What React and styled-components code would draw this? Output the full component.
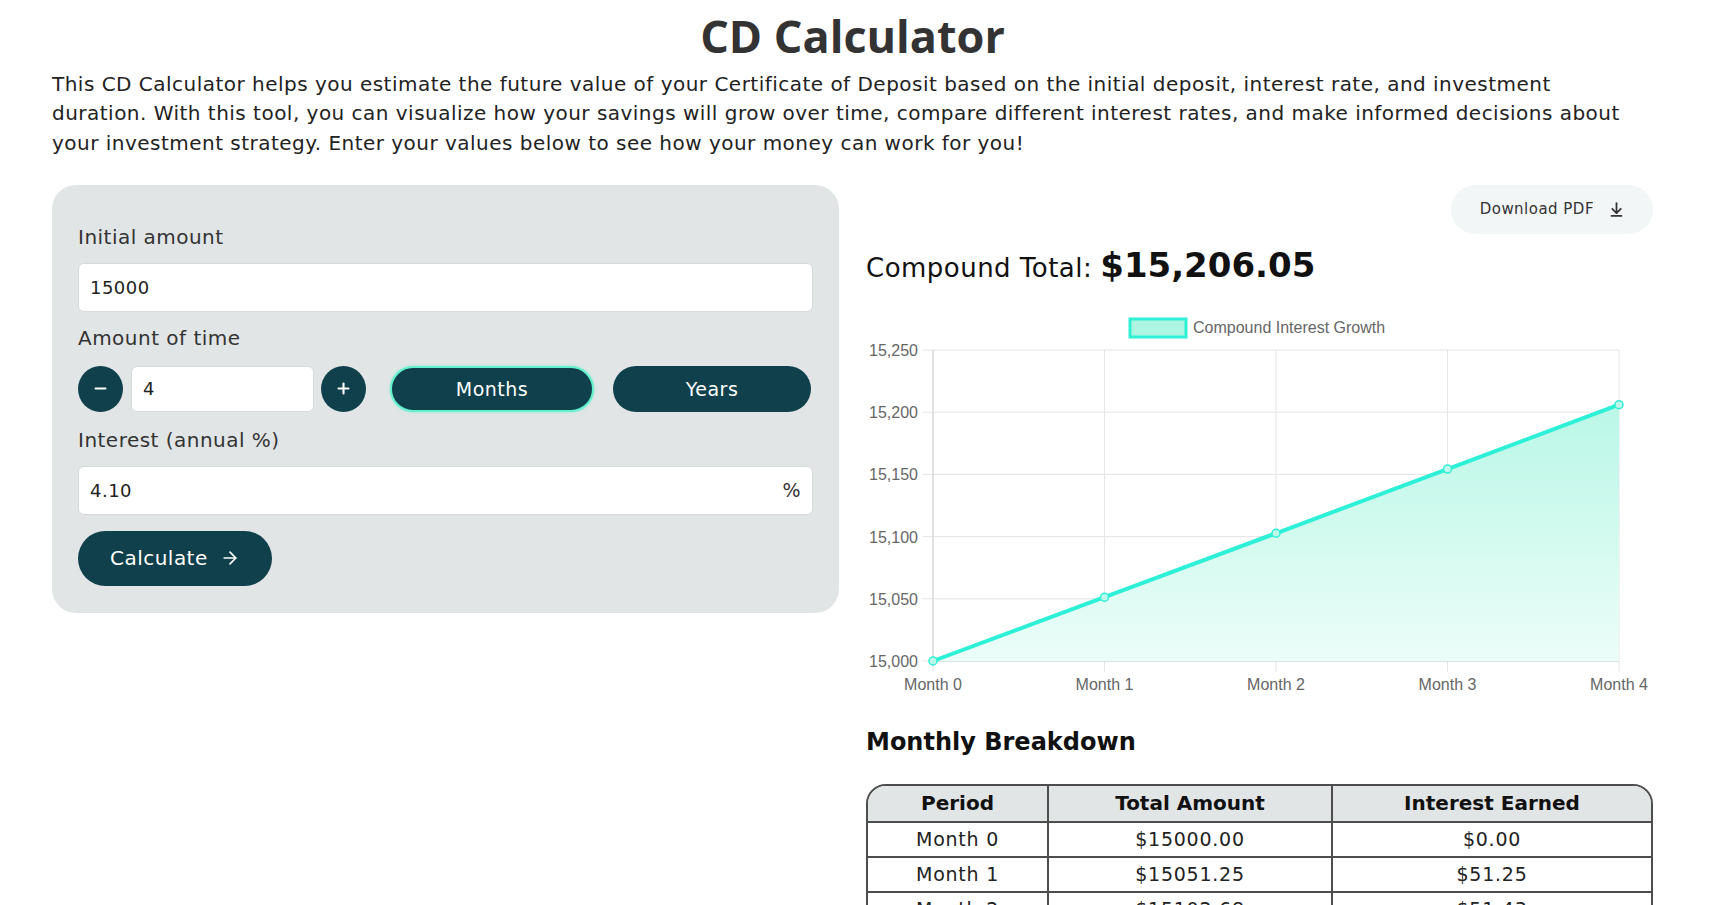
import React from "react";
import styled, { createGlobalStyle } from "styled-components";
import { Minus, Plus, ArrowRight, ArrowDownToLine } from "lucide-react";

const GlobalStyle = createGlobalStyle`
  * { box-sizing: border-box; }
  body {
    margin: 0;
    background: #ffffff;
    font-family: "DejaVu Sans", "Open Sans", sans-serif;
    letter-spacing: 0.03em;
    color: #222;
  }
`;

const Page = styled.div`
  width: 1653px;
  padding: 8px 0 40px 52px;
`;

const Title = styled.h1`
  margin: 0;
  text-align: center;
  font-family: "Open Sans", sans-serif;
  font-size: 45px;
  font-weight: 700;
  letter-spacing: 0;
  line-height: 56px;
  color: #333;
`;

const Intro = styled.p`
  margin: 6px 0 0;
  font-size: 20px;
  line-height: 29.3px;
  color: #222;
  white-space: nowrap;
`;

const Columns = styled.div`
  display: grid;
  grid-template-columns: 787px 787px;
  gap: 27px;
  margin-top: 27px;
  align-items: start;
`;

const Panel = styled.div`
  background: #e1e5e6;
  border-radius: 24px;
  padding: 38px 26px 27px;
  display: flex;
  flex-direction: column;
  align-items: stretch;
`;

const Label = styled.div`
  font-size: 20px;
  line-height: 28px;
  color: #333;
  margin-bottom: 12px;
`;

const Field = styled.div`
  display: flex;
  align-items: center;
  height: 49px;
  background: #fff;
  border: 1px solid #d6dadb;
  border-radius: 6px;
  padding: 0 11px;
  font-size: 18px;
  color: #222;
  margin-bottom: ${(p) => p.$mb ?? 12}px;
  width: ${(p) => (p.$w ? `${p.$w}px` : "auto")};
`;

const FieldValue = styled.span`
  flex: 1;
`;

const Suffix = styled.span`
  color: #333;
  font-size: 19px;
`;

const TimeRow = styled.div`
  display: flex;
  align-items: center;
  height: 46px;
  margin: 2px 0 14px;
`;

const RoundButton = styled.div`
  width: 45px;
  height: 46px;
  border-radius: 50%;
  background: #0f404b;
  color: #fff;
  display: flex;
  align-items: center;
  justify-content: center;
  flex-shrink: 0;
`;

const TimeInput = styled(Field)`
  height: 46px;
  margin: 0 7px 0 8px;
`;

const UnitButton = styled.div`
  width: ${(p) => p.$w}px;
  height: 46px;
  margin-left: ${(p) => p.$ml}px;
  border-radius: 23px;
  background: #0f404b;
  color: #fff;
  font-size: 19px;
  display: flex;
  align-items: center;
  justify-content: center;
  border: ${(p) => (p.$active ? "2.5px solid #63f0cc" : "none")};
  box-shadow: ${(p) => (p.$active ? "0 0 3px rgba(99,240,204,0.7)" : "none")};
`;

const CalcButton = styled.div`
  align-self: flex-start;
  display: flex;
  align-items: center;
  gap: 12px;
  height: 55px;
  padding: 0 32px 0 32px;
  margin-top: 2px;
  border-radius: 28px;
  background: #0f404b;
  color: #fff;
  font-size: 20px;
`;

const Results = styled.div`
  display: flex;
  flex-direction: column;
`;

const TopBar = styled.div`
  display: flex;
  justify-content: flex-end;
`;

const DownloadButton = styled.div`
  display: flex;
  align-items: center;
  gap: 14px;
  height: 49px;
  padding: 0 28px 0 29px;
  border-radius: 25px;
  background: #f3f6f7;
  color: #333;
  font-size: 15px;
`;

const Total = styled.div`
  display: flex;
  align-items: baseline;
  gap: 8px;
  margin-top: 11px;
  height: 52px;
  color: #111;
`;

const TotalLabel = styled.span`
  font-size: 26px;
`;

const TotalValue = styled.span`
  font-size: 34px;
  font-weight: 700;
  letter-spacing: 0;
`;

const ChartBox = styled.div`
  width: 787px;
  height: 400px;
  margin-top: 3px;
  svg {
    display: block;
    font-family: "Liberation Sans", Arial, sans-serif;
    letter-spacing: 0;
  }
`;

const SectionTitle = styled.h2`
  margin: 26px 0 0;
  font-size: 24px;
  line-height: 32px;
  font-weight: 700;
  letter-spacing: 0;
  color: #111;
`;

const Table = styled.table`
  margin-top: 26px;
  width: 787px;
  border-collapse: separate;
  border-spacing: 0;
  border: 2px solid #4d4d4d;
  border-radius: 20px 20px 0 0;
  overflow: hidden;
  font-size: 19px;
  letter-spacing: 0.04em;
  color: #222;
  th,
  td {
    text-align: center;
    border-left: 2px solid #4d4d4d;
    border-top: 2px solid #4d4d4d;
    padding: 0;
  }
  th:first-child,
  td:first-child {
    border-left: none;
  }
  thead th {
    border-top: none;
    background: #e1e5e6;
    font-size: 20px;
    font-weight: 700;
    letter-spacing: 0;
    height: 35px;
    color: #111;
  }
  td {
    height: 35px;
  }
`;

const rows = [
  ["Month 0", "$15000.00", "$0.00"],
  ["Month 1", "$15051.25", "$51.25"],
  ["Month 2", "$15102.68", "$51.43"],
  ["Month 3", "$15154.28", "$51.60"],
  ["Month 4", "$15206.05", "$51.78"],
];

const values = [15000, 15051.25, 15102.68, 15154.28, 15206.05];

function Chart() {
  const left = 67;
  const step = 171.5;
  const bottom = 361;
  const scale = 311 / 250;
  const px = (i) => left + i * step;
  const py = (v) => bottom - (v - 15000) * scale;
  const pts = values.map((v, i) => [px(i), py(v)]);
  const line = pts.map((p) => p.join(",")).join(" ");
  const area = `${left},${bottom} ${line} ${px(4)},${bottom}`;
  const ticks = [15250, 15200, 15150, 15100, 15050, 15000];

  return (
    <svg width="787" height="400" viewBox="0 0 787 400">
      <defs>
        <linearGradient id="fill" x1="0" y1="0" x2="0" y2="1">
          <stop offset="0%" stopColor="#b9f7e6" />
          <stop offset="100%" stopColor="#ecfdf9" />
        </linearGradient>
      </defs>
      <rect x="264" y="19" width="56" height="18" fill="#aef5e1" stroke="#2ef0d6" strokeWidth="3" />
      <text x="327" y="33" fontSize="16" fill="#666">
        Compound Interest Growth
      </text>
      {ticks.map((t) => (
        <g key={t}>
          <line x1="57" x2="753" y1={py(t)} y2={py(t)} stroke="#e4e4e4" strokeWidth="1" />
          <text x="52" y={py(t) + 6} fontSize="16" fill="#666" textAnchor="end">
            {t.toLocaleString("en-US")}
          </text>
        </g>
      ))}
      {values.map((v, i) => (
        <g key={i}>
          <line x1={px(i)} x2={px(i)} y1="50" y2="372" stroke="#e4e4e4" strokeWidth="1" />
          <text x={px(i)} y="390" fontSize="16" fill="#666" textAnchor="middle">
            Month {i}
          </text>
        </g>
      ))}
      <line x1={left} x2={left} y1="50" y2={bottom} stroke="#d0d0d0" />
      <line x1={left} x2="753" y1={bottom} y2={bottom} stroke="#d0d0d0" />
      <polygon points={area} fill="url(#fill)" />
      <polyline points={line} fill="none" stroke="#2ef0d6" strokeWidth="4" strokeLinejoin="round" />
      {pts.map(([x, y], i) => (
        <circle key={i} cx={x} cy={y} r="4" fill="#bff8ea" stroke="#2ef0d6" strokeWidth="1.5" />
      ))}
    </svg>
  );
}

export default function App() {
  return (
    <>
      <GlobalStyle />
      <Page>
        <Title>CD Calculator</Title>
        <Intro>
          This CD Calculator helps you estimate the future value of your Certificate of Deposit based on
          the initial deposit, interest rate, and investment
          <br />
          duration. With this tool, you can visualize how your savings will grow over time, compare
          different interest rates, and make informed decisions about
          <br />
          your investment strategy. Enter your values below to see how your money can work for you!
        </Intro>
        <Columns>
          <Panel>
            <Label>Initial amount</Label>
            <Field>
              <FieldValue>15000</FieldValue>
            </Field>
            <Label>Amount of time</Label>
            <TimeRow>
              <RoundButton>
                <Minus size={17} strokeWidth={3} />
              </RoundButton>
              <TimeInput $w={183} $mb={0}>
                <FieldValue>4</FieldValue>
              </TimeInput>
              <RoundButton>
                <Plus size={17} strokeWidth={3} />
              </RoundButton>
              <UnitButton $w={204} $ml={24} $active>
                Months
              </UnitButton>
              <UnitButton $w={198} $ml={19}>
                Years
              </UnitButton>
            </TimeRow>
            <Label>Interest (annual %)</Label>
            <Field $mb={14}>
              <FieldValue>4.10</FieldValue>
              <Suffix>%</Suffix>
            </Field>
            <CalcButton>
              Calculate
              <ArrowRight size={20} strokeWidth={2} />
            </CalcButton>
          </Panel>
          <Results>
            <TopBar>
              <DownloadButton>
                Download PDF
                <ArrowDownToLine size={17} strokeWidth={2.5} />
              </DownloadButton>
            </TopBar>
            <Total>
              <TotalLabel>Compound Total:</TotalLabel>
              <TotalValue>$15,206.05</TotalValue>
            </Total>
            <ChartBox>
              <Chart />
            </ChartBox>
            <SectionTitle>Monthly Breakdown</SectionTitle>
            <Table>
              <thead>
                <tr>
                  <th style={{ width: 179 }}>Period</th>
                  <th style={{ width: 284 }}>Total Amount</th>
                  <th>Interest Earned</th>
                </tr>
              </thead>
              <tbody>
                {rows.map((r) => (
                  <tr key={r[0]}>
                    {r.map((c, i) => (
                      <td key={i}>{c}</td>
                    ))}
                  </tr>
                ))}
              </tbody>
            </Table>
          </Results>
        </Columns>
      </Page>
    </>
  );
}
